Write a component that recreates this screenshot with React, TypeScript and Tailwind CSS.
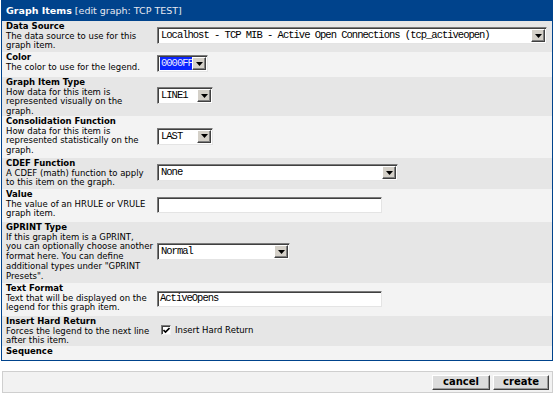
import React from "react";

const sans = "font-['DejaVu_Sans',Verdana,sans-serif]";
const mono = "font-['Liberation_Mono',monospace]";

function Arrow() {
  return (
    <div className="flex h-full w-[14px] shrink-0 items-center justify-center border border-t-white border-l-white border-r-[#404040] border-b-[#404040] bg-[#d4d0c8] shadow-[inset_-1px_-1px_0_#808080]">
      <svg width="7" height="4" viewBox="0 0 7 4">
        <path d="M0 0h7L3.5 4z" fill="#000" />
      </svg>
    </div>
  );
}

function Select({
  value,
  width,
  highlight,
}: {
  value: string;
  width: string;
  highlight?: boolean;
}) {
  return (
    <div
      className={`flex h-[17px] items-stretch border border-t-[#7b7b7b] border-l-[#7b7b7b] border-r-[#e4e4e4] border-b-[#e4e4e4] bg-white p-[1px] shadow-[inset_1px_1px_0_#404040] ${width}`}
    >
      <div className="flex flex-1 items-center overflow-hidden pl-[1px]">
        <span
          className={`${mono} whitespace-nowrap text-[10.5px] leading-[13px] tracking-[-1px] ${
            highlight ? "bg-[#0a24ff] pl-[1px] pr-[3px] text-[#e8e8ff]" : "pl-[1px] text-black"
          }`}
        >
          {value}
        </span>
      </div>
      <Arrow />
    </div>
  );
}

function TextInput({ value }: { value: string }) {
  return (
    <div className="flex h-[16px] w-[225px] items-center border border-t-[#7b7b7b] border-l-[#7b7b7b] border-r-[#e4e4e4] border-b-[#e4e4e4] bg-white pl-[2px] shadow-[inset_1px_1px_0_#404040]">
      <span className={`${mono} whitespace-nowrap text-[10.5px] leading-[13px] tracking-[-1px] text-black`}>
        {value}
      </span>
    </div>
  );
}

function HardReturn() {
  return (
    <div className="flex items-center">
      <div className="ml-[4px] flex h-[10px] w-[10px] items-center justify-center border border-t-[#7b7b7b] border-l-[#7b7b7b] border-r-[#f0f0f0] border-b-[#f0f0f0] bg-white shadow-[inset_1px_1px_0_#404040]">
        <svg width="7" height="7" viewBox="0 0 7 7">
          <path d="M0.5 3l2 2 4-4" stroke="#000" strokeWidth="1.6" fill="none" />
        </svg>
      </div>
      <span className={`${sans} ml-[4px] text-[8.5px] leading-[10px] text-black`}>
        Insert Hard Return
      </span>
    </div>
  );
}

const rows: {
  title: string;
  lines: string[];
  h: string;
  bg: string;
  control?: React.ReactNode;
}[] = [
  {
    title: "Data Source",
    lines: ["The data source to use for this", "graph item."],
    h: "h-[31px]",
    bg: "bg-[#e6e6e6]",
    control: (
      <Select
        value="Localhost - TCP MIB - Active Open Connections (tcp_activeopen)"
        width="w-[390px]"
      />
    ),
  },
  {
    title: "Color",
    lines: ["The color to use for the legend."],
    h: "h-[25px]",
    bg: "bg-[#f3f3f3]",
    control: <Select value="0000FF" width="w-[51px]" highlight />,
  },
  {
    title: "Graph Item Type",
    lines: ["How data for this item is", "represented visually on the", "graph."],
    h: "h-[39px]",
    bg: "bg-[#e6e6e6]",
    control: <Select value="LINE1" width="w-[56px]" />,
  },
  {
    title: "Consolidation Function",
    lines: ["How data for this item is", "represented statistically on the", "graph."],
    h: "h-[42px]",
    bg: "bg-[#f3f3f3]",
    control: <Select value="LAST" width="w-[56px]" />,
  },
  {
    title: "CDEF Function",
    lines: ["A CDEF (math) function to apply", "to this item on the graph."],
    h: "h-[31px]",
    bg: "bg-[#e6e6e6]",
    control: <Select value="None" width="w-[241px]" />,
  },
  {
    title: "Value",
    lines: ["The value of an HRULE or VRULE", "graph item."],
    h: "h-[33px]",
    bg: "bg-[#f3f3f3]",
    control: <TextInput value="" />,
  },
  {
    title: "GPRINT Type",
    lines: [
      "If this graph item is a GPRINT,",
      "you can optionally choose another",
      "format here. You can define",
      'additional types under "GPRINT',
      'Presets".',
    ],
    h: "h-[61px]",
    bg: "bg-[#e6e6e6]",
    control: <Select value="Normal" width="w-[133px]" />,
  },
  {
    title: "Text Format",
    lines: ["Text that will be displayed on the", "legend for this graph item."],
    h: "h-[33px]",
    bg: "bg-[#f3f3f3]",
    control: <TextInput value="ActiveOpens" />,
  },
  {
    title: "Insert Hard Return",
    lines: ["Forces the legend to the next line", "after this item."],
    h: "h-[30px]",
    bg: "bg-[#e6e6e6]",
    control: <HardReturn />,
  },
  {
    title: "Sequence",
    lines: [],
    h: "h-[14px]",
    bg: "bg-[#f3f3f3]",
  },
];

export default function App() {
  return (
    <div className={`${sans} h-[400px] w-[554px] bg-white`}>
      <div className="ml-[1px] w-[552px] border border-[#00438c]">
        <div className="flex h-[20px] items-center bg-[#00438c] pl-[4px] text-[9.5px] text-white">
          <span className="font-bold">Graph Items</span>
          <span className="ml-[3px] text-[#e6e9f2]">[edit graph: TCP TEST]</span>
        </div>
        {rows.map((r) => (
          <div key={r.title} className={`flex ${r.h} ${r.bg}`}>
            <div className="w-[154px] shrink-0 whitespace-nowrap pl-[4px] pt-[1px] text-[8.5px] leading-[9.7px] text-black">
              <div className="font-bold">{r.title}</div>
              {r.lines.map((l) => (
                <div key={l}>{l}</div>
              ))}
            </div>
            <div className="flex flex-1 items-center pb-[2px] pl-[1px]">{r.control}</div>
          </div>
        ))}
      </div>
      <div className="ml-[2px] mt-[10px] flex h-[22px] w-[551px] items-center justify-end gap-[3px] border border-[#cfcfcf] bg-[#f2f2f2] pr-[3px]">
        <button className="h-[15px] w-[58px] border border-t-white border-l-white border-r-[#404040] border-b-[#404040] bg-[#dcdcdc] text-[10px] font-bold leading-[12px] text-black shadow-[inset_-1px_-1px_0_#9a9a9a]">
          cancel
        </button>
        <button className="h-[15px] w-[56px] border border-t-white border-l-white border-r-[#404040] border-b-[#404040] bg-[#dcdcdc] text-[10px] font-bold leading-[12px] text-black shadow-[inset_-1px_-1px_0_#9a9a9a]">
          create
        </button>
      </div>
    </div>
  );
}
